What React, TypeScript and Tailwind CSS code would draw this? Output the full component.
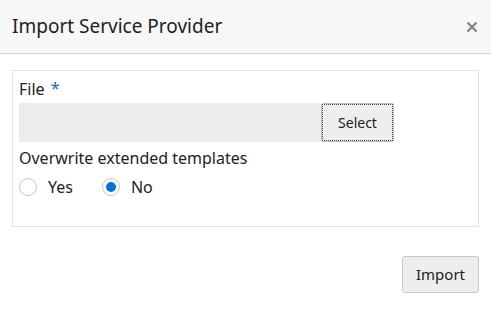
import { useState } from "react";

export default function App() {
  const [overwrite, setOverwrite] = useState("no");

  return (
    <div className="w-[491px] h-[310px] bg-white text-[#222] font-['Noto_Sans','Open_Sans',sans-serif]">
      <div className="h-[54px] bg-[#f7f7f7] border-b border-[#d6d6d6] flex items-center justify-between pl-[12px] pr-[13px]">
        <h1 className="text-[19px] text-[#222] leading-none">Import Service Provider</h1>
        <button type="button" className="text-[#888] w-[12px] h-[12px]">
          <svg viewBox="0 0 12 12" className="w-[12px] h-[12px]">
            <path d="M1.5 1.5 L10.5 10.5 M10.5 1.5 L1.5 10.5" stroke="currentColor" strokeWidth="2.4" />
          </svg>
        </button>
      </div>

      <div className="px-[12px] pt-[16px]">
        <div className="border border-[#e3e3e3] px-[6px] pt-[6px] pb-[24px]">
          <div className="flex items-start h-[26px] text-[16px]">
            <span>File</span>
            <span className="ml-[6px] text-[#1f6fb5] text-[17px] leading-none mt-[2px]">*</span>
          </div>
          <div className="flex h-[39px]">
            <div className="w-[302px] bg-[#ececec]" />
            <button
              type="button"
              className="w-[73px] bg-[#eeeeee] border border-[#bdbdbd] rounded-[2px] text-[14px] text-[#222] outline-1 outline-dotted outline-[#444] -outline-offset-2"
            >
              Select
            </button>
          </div>
          <p className="text-[16px] mt-[5px] leading-[22px]">Overwrite extended templates</p>
          <div className="flex items-center mt-[3px] h-[30px] text-[16px]">
            <label className="flex items-center gap-[11px] mr-[29px] cursor-pointer" onClick={() => setOverwrite("yes")}>
              <span className="w-[18px] h-[18px] rounded-full border border-[#c8c8c8] flex items-center justify-center bg-white">
                {overwrite === "yes" && <span className="w-[10px] h-[10px] rounded-full bg-[#0a74d1]" />}
              </span>
              Yes
            </label>
            <label className="flex items-center gap-[11px] cursor-pointer" onClick={() => setOverwrite("no")}>
              <span className="w-[18px] h-[18px] rounded-full border border-[#c8c8c8] flex items-center justify-center bg-white">
                {overwrite === "no" && <span className="w-[10px] h-[10px] rounded-full bg-[#0a74d1]" />}
              </span>
              No
            </label>
          </div>
        </div>

        <div className="flex justify-end mt-[29px]">
          <button
            type="button"
            className="w-[77px] h-[37px] bg-[#eeeeee] border border-[#c8c8c8] rounded-[3px] text-[15px] text-[#222]"
          >
            Import
          </button>
        </div>
      </div>
    </div>
  );
}
